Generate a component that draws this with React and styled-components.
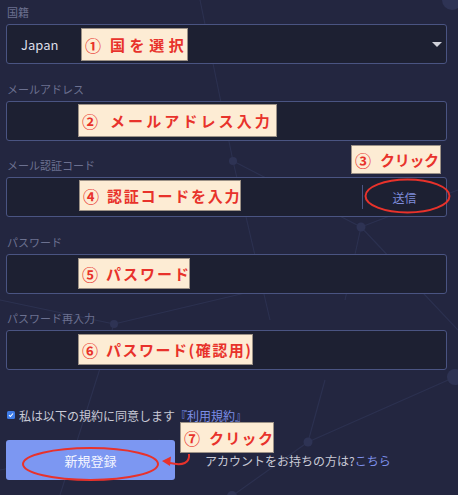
import React from 'react'
import styled, { createGlobalStyle } from 'styled-components'

const GlobalStyle = createGlobalStyle`
  html, body {
    margin: 0;
    padding: 0;
    background: #232640;
  }
  body {
    font-family: "Noto Sans CJK JP", "Noto Sans", sans-serif;
  }
`

const Page = styled.div`
  position: relative;
  width: 458px;
  height: 495px;
  overflow: hidden;
  background: #232640;
`

const Network = styled.svg`
  position: absolute;
  left: 0;
  top: 0;
  pointer-events: none;
`

const Form = styled.div`
  position: relative;
  padding: 0 11px 0 6px;
`

const Field = styled.div`
  margin-bottom: 12.5px;
`

const Label = styled.div`
  height: 24px;
  line-height: 24px;
  font-size: 11px;
  color: #6c7190;
  padding-left: 1px;
`

const Box = styled.div`
  height: 40px;
  box-sizing: border-box;
  border: 1px solid #4a5482;
  border-radius: 3px;
  background: #1d2032;
  display: flex;
  align-items: center;
  padding-left: ${props => props.pad || 0}px;
`

const Value = styled.span`
  flex: 1;
  font-size: 13px;
  color: #dcdee8;
`

const Caret = styled.span`
  width: 0;
  height: 0;
  border-left: 5px solid transparent;
  border-right: 5px solid transparent;
  border-top: 5px solid #d0d1da;
  margin-right: 4px;
`

const Divider = styled.span`
  width: 1px;
  height: 24px;
  background: #4a5482;
  margin-left: auto;
`

const SendButton = styled.span`
  width: 83px;
  text-align: center;
  font-size: 12px;
  color: #7f8cdb;
`

const AgreeRow = styled.div`
  margin-top: 37px;
  height: 16px;
  display: flex;
  align-items: center;
  font-size: 12px;
  color: #c9cad6;
`

const Check = styled.span`
  width: 8px;
  height: 8px;
  border-radius: 1.5px;
  background: #3d7be8;
  margin: 0 4px 0 1px;
  display: flex;
  align-items: center;
  justify-content: center;
`

const Link = styled.span`
  color: #7d8fe8;
`

const ActionRow = styled.div`
  margin-top: 17px;
  display: flex;
  align-items: center;
  gap: 30px;
`

const Submit = styled.div`
  width: 169px;
  height: 40px;
  border-radius: 3px;
  background: #7c97f2;
  color: #f4f6ff;
  font-size: 13px;
  display: flex;
  align-items: center;
  justify-content: center;
`

const LoginText = styled.span`
  font-size: 12px;
  color: #c9cad6;
`

const Note = styled.div`
  position: absolute;
  left: ${props => props.x}px;
  top: ${props => props.y}px;
  width: ${props => props.w}px;
  height: ${props => props.h}px;
  box-sizing: border-box;
  background: #fdecd4;
  border: 1px solid #9c9186;
  color: #e8322b;
  font-size: 15px;
  font-weight: bold;
  white-space: nowrap;
  display: flex;
  align-items: center;
  padding-left: 3px;
`

const Num = styled.span`
  font-size: 16px;
  margin-right: ${props => props.gap}px;
`

const NoteText = styled.span`
  letter-spacing: ${props => props.ls}px;
  margin-right: ${props => -props.ls}px;
`

const Marks = styled.svg`
  position: absolute;
  left: 0;
  top: 0;
  pointer-events: none;
`

const notes = [
  { x: 81, y: 28, w: 107, h: 33, num: '①', gap: 9, ls: 4.6, text: '国を選択' },
  { x: 78, y: 104, w: 199, h: 33, num: '②', gap: 12, ls: 3.1, text: 'メールアドレス入力' },
  { x: 351, y: 145, w: 90, h: 29, num: '③', gap: 9, ls: -0.3, text: 'クリック' },
  { x: 79, y: 180, w: 162, h: 31, num: '④', gap: 8, ls: 1.8, text: '認証コードを入力' },
  { x: 78, y: 258, w: 112, h: 31, num: '⑤', gap: 8, ls: 2, text: 'パスワード' },
  { x: 78, y: 334, w: 175, h: 31, num: '⑥', gap: 8, ls: 1.5, text: 'パスワード(確認用)' },
  { x: 180, y: 422, w: 94, h: 31, num: '⑦', gap: 9, ls: 1.3, text: 'クリック' },
]

const dots = [
  [233, 161, 4], [361, 227, 4.5], [114, 324, 4], [308, 442, 4.5], [455, 377, 8], [452, 0, 10], [232, 496, 5],
]

const lines = [
  [233, 161, 361, 227], [233, 161, 200, 0], [233, 161, 270, 320], [361, 227, 458, 190],
  [361, 227, 345, 300], [361, 227, 458, 330], [114, 324, 0, 300], [114, 324, 300, 280],
  [114, 324, 60, 495], [308, 442, 232, 496], [308, 442, 455, 377], [308, 442, 325, 380],
  [0, 470, 160, 440],
]

const Background = () => (
  <Network width="458" height="495" viewBox="0 0 458 495">
    {lines.map(([x1, y1, x2, y2], i) => (
      <line key={i} x1={x1} y1={y1} x2={x2} y2={y2} stroke="#2c3150" strokeWidth="1.1" />
    ))}
    {dots.map(([cx, cy, r], i) => (
      <circle key={i} cx={cx} cy={cy} r={r} fill="#2e3354" />
    ))}
  </Network>
)

const Annotations = () => (
  <>
    {notes.map(n => (
      <Note key={n.num} x={n.x} y={n.y} w={n.w} h={n.h}>
        <Num gap={n.gap}>{n.num}</Num>
        <NoteText ls={n.ls}>{n.text}</NoteText>
      </Note>
    ))}
    <Marks width="458" height="495" viewBox="0 0 458 495">
      <ellipse cx="407.5" cy="196" rx="42" ry="16.5" fill="none" stroke="#e8322b" strokeWidth="2" />
      <ellipse cx="90.5" cy="464" rx="67.5" ry="16" fill="none" stroke="#e8322b" strokeWidth="2" />
      <path d="M189 454 C 190 463, 183 466, 170 463" fill="none" stroke="#e8322b" strokeWidth="2" />
      <path d="M162 461 L171 456.5 L170 466 Z" fill="#e8322b" />
    </Marks>
  </>
)

const App = () => (
  <Page>
    <GlobalStyle />
    <Background />
    <Form>
      <Field>
        <Label>国籍</Label>
        <Box pad={14}>
          <Value>Japan</Value>
          <Caret />
        </Box>
      </Field>
      <Field>
        <Label>メールアドレス</Label>
        <Box />
      </Field>
      <Field>
        <Label>メール認証コード</Label>
        <Box>
          <Divider />
          <SendButton>送信</SendButton>
        </Box>
      </Field>
      <Field>
        <Label>パスワード</Label>
        <Box />
      </Field>
      <Field>
        <Label>パスワード再入力</Label>
        <Box />
      </Field>
      <AgreeRow>
        <Check>
          <svg width="6" height="6" viewBox="0 0 6 6">
            <path d="M1 3.2 L2.4 4.5 L5 1.5" fill="none" stroke="#fff" strokeWidth="1.1" />
          </svg>
        </Check>
        私は以下の規約に同意します<Link>『利用規約』</Link>
      </AgreeRow>
      <ActionRow>
        <Submit>新規登録</Submit>
        <LoginText>アカウントをお持ちの方は?<Link>こちら</Link></LoginText>
      </ActionRow>
    </Form>
    <Annotations />
  </Page>
)

export default App
